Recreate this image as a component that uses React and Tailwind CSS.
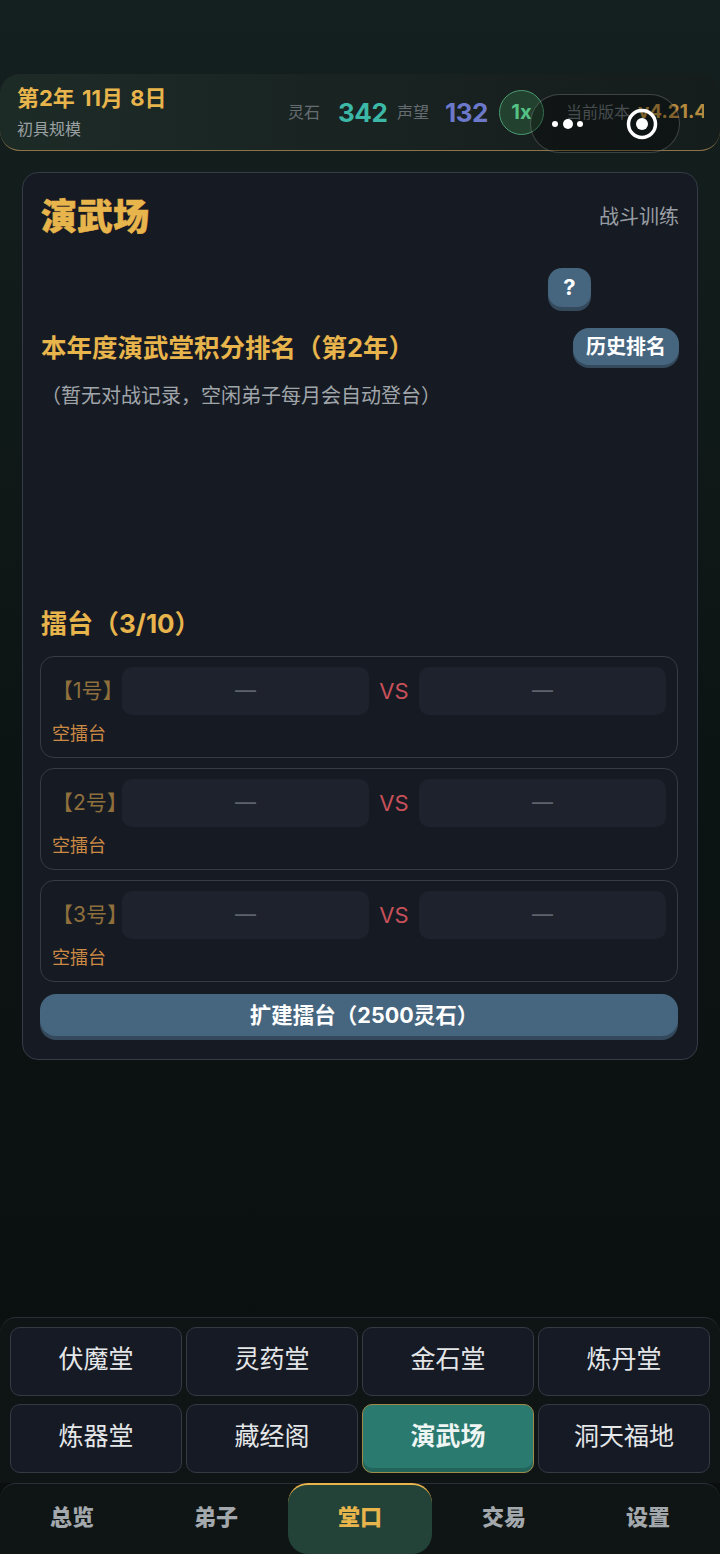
const halls = [
  ['伏魔堂', false],
  ['灵药堂', false],
  ['金石堂', false],
  ['炼丹堂', false],
  ['炼器堂', false],
  ['藏经阁', false],
  ['演武场', true],
  ['洞天福地', false],
];

const tabs = ['总览', '弟子', '堂口', '交易', '设置'];

const Arena = ({ label }) => (
  <div className="h-[102px] rounded-[14px] border border-[#353b47] px-[11px] pt-[10px]">
    <div className="flex h-[48px] items-center">
      <div className="w-[70px] shrink-0 overflow-hidden whitespace-nowrap text-[21px] text-[#8f6f3c]">{label}</div>
      <div className="flex h-full w-[248px] items-center justify-center rounded-[10px] bg-[#1e222d] text-[21px] text-[#5d636d]">—</div>
      <div className="w-[50px] text-center text-[22px] text-[#c8505a]">VS</div>
      <div className="flex h-full w-[248px] items-center justify-center rounded-[10px] bg-[#1e222d] text-[21px] text-[#5d636d]">—</div>
    </div>
    <div className="mt-[6px] text-[18px] leading-[26px] text-[#cc8a45]">空擂台</div>
  </div>
);

export default function App() {
  return (
    <div className="relative flex h-[1554px] flex-col overflow-hidden bg-gradient-to-b from-[#14201f] via-[#0c1413] to-[#0a0f0e] font-['Inter','Noto_Sans_CJK_SC',sans-serif]">
      <div className="h-[74px] shrink-0" />

      <header className="flex h-[77px] shrink-0 items-center justify-between rounded-[20px] border-b border-[#8c7448] bg-gradient-to-r from-[#1d2b27] to-[#151c1c] pl-[17px] pr-[16px]">
        <div>
          <div className="text-[22px] font-bold leading-[30px] text-[#e8b44c] [word-spacing:2px]">第2年 11月 8日</div>
          <div className="mt-[4px] text-[16px] leading-[24px] text-[#9ba1a3]">初具规模</div>
        </div>
        <div className="flex w-[416px] items-center overflow-hidden whitespace-nowrap">
          <span className="text-[16px] text-[#666d72]">灵石</span>
          <span className="ml-[18px] w-[48px] text-[26px] font-bold tracking-[-0.5px] text-[#3cb8a6]">342</span>
          <span className="ml-[11px] text-[16px] text-[#666d72]">声望</span>
          <span className="ml-[16px] w-[45px] text-[26px] font-bold tracking-[-0.5px] text-[#6c78c9]">132</span>
          <span className="ml-[11px] flex h-[45px] w-[45px] shrink-0 items-center justify-center rounded-full border border-[#4c9a72] bg-[#23412f] text-[20px] font-bold text-[#55c285]">1x</span>
          <span className="ml-[22px] text-[16px] text-[#666d72]">当前版本</span>
          <span className="ml-[8px] text-[19px] font-bold text-[#b48a3e]">v4.21.4</span>
        </div>
      </header>

      {/* 小程序胶囊 */}
      <div className="absolute left-[530px] top-[94px] flex h-[59px] w-[150px] items-center rounded-full border border-white/20 bg-black/30">
        <svg width="74" height="20" viewBox="0 0 74 20" className="shrink-0">
          <circle cx="24" cy="10" r="3" fill="#fff" />
          <circle cx="37" cy="10" r="5" fill="#fff" />
          <circle cx="49" cy="10" r="3" fill="#fff" />
        </svg>
        <div className="h-[34px] w-px bg-white/25" />
        <svg width="74" height="34" viewBox="0 0 74 34" className="shrink-0">
          <circle cx="37" cy="17" r="13.5" fill="none" stroke="#fff" strokeWidth="3.5" />
          <circle cx="37" cy="17" r="6" fill="#fff" />
        </svg>
      </div>

      <main className="min-h-0 flex-1 px-[22px] pt-[21px]">
        <section className="h-[888px] rounded-[16px] border border-[#353b47] bg-[#161b23] px-[18px]">
          <div className="flex h-[88px] items-center justify-between">
            <h1 className="text-[36px] font-black text-[#e8b44c] [-webkit-text-stroke:0.5px_#e8b44c]">演武场</h1>
            <span className="text-[20px] text-[#989da3]">战斗训练</span>
          </div>

          <div className="mt-[7px] flex h-[43px] justify-end pr-[88px]">
            <button className="h-[39px] w-[43px] rounded-[14px] bg-[#46667f] pb-[2px] text-[22px] font-bold leading-[36px] text-white shadow-[0_4px_0_#34495c]">?</button>
          </div>

          <div className="mt-[17px] flex h-[40px] justify-between">
            <h2 className="text-[25.5px] font-bold leading-[40px] text-[#e8b44c]">本年度演武堂积分排名（第2年）</h2>
            <button className="h-[37px] w-[106px] rounded-[16px] bg-[#46667f] text-[20px] font-bold text-white shadow-[0_3px_0_#34495c]">历史排名</button>
          </div>

          <p className="mt-[13px] text-[20px] leading-[30px] text-[#a0a5aa]">（暂无对战记录，空闲弟子每月会自动登台）</p>

          <h2 className="mt-[193px] text-[26px] font-bold leading-[40px] text-[#e8b44c]">擂台（3/10）</h2>

          <div className="-ml-px mr-px mt-[12px] flex flex-col gap-[10px]">
            <Arena label="【1号】" />
            <Arena label="【2号】" />
            <Arena label="【3号】" />
          </div>

          <button className="-ml-px mr-px mt-[12px] h-[42px] w-full rounded-[16px] bg-[#46667f] pl-[10px] text-[21.5px] font-bold text-white shadow-[0_4px_0_#34495c]">扩建擂台（2500灵石）</button>
        </section>
      </main>

      <div className="shrink-0 rounded-t-[16px] border-t border-[#2a303a] bg-[#0f1514] px-[10px] pb-[10px] pt-[9px]">
        <div className="grid grid-cols-4 gap-x-[4px] gap-y-[8px]">
          {halls.map(([name, active]) => (
            <button
              key={name}
              className={active
                ? 'h-[69px] rounded-[10px] border border-[#a08a4a] bg-[#2a7a70] pb-[4px] text-[25px] font-bold text-[#eef5f3] shadow-[inset_0_-4px_0_#226459]'
                : 'h-[69px] rounded-[10px] border border-[#333a46] bg-[#161a24] pb-[4px] text-[25px] text-[#e4e6e8]'}
            >
              {name}
            </button>
          ))}
        </div>
      </div>

      <nav className="grid h-[71px] shrink-0 grid-cols-5 rounded-t-[16px] border-t border-[#2a303a] bg-[#0f1514]">
        {tabs.map((tab) => (
          <button
            key={tab}
            className={tab === '堂口'
              ? '-mt-px rounded-[20px] border-t-2 border-[#e8b44c] bg-[#234238] pb-[4px] text-[22px] font-black text-[#e8b44c]'
              : 'pb-[4px] text-[22px] font-black text-[#a3a8ad]'}
          >
            {tab}
          </button>
        ))}
      </nav>
    </div>
  );
}
